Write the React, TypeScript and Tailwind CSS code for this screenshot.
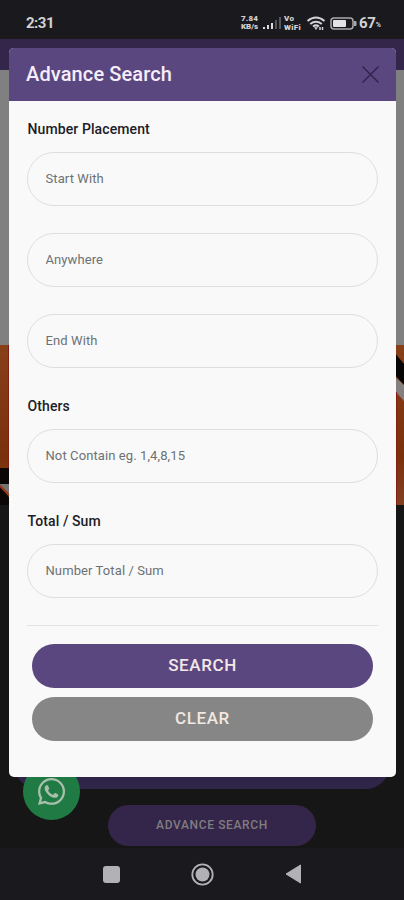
import React from "react";
import { FaWhatsapp } from "react-icons/fa";

function StatusBar() {
  return (
    <header className="flex h-[39px] shrink-0 items-start bg-[#1a191d] pl-[26px] pt-[13px] text-[#d2d2d4]">
      <span className="w-[215px] text-[15px] font-bold leading-5 tracking-[-0.5px]">2:31</span>
      <div className="flex h-5 items-center">
        <div className="w-[21px] whitespace-nowrap text-[8px] font-black leading-[8px]">
          <div className="tracking-[0.2px]">7.84</div>
          <div>KB/s</div>
        </div>
        <svg className="h-[13px] w-[19px]" viewBox="0 0 19 13">
          <path d="M1 10h2v2H1zM5 8h2v4H5zM9 6h2v6H9z" fill="#dddddf" />
          <path d="M13 3h2v9h-2zM17 0h2v12h-2z" fill="#55555a" />
        </svg>
        <div className="ml-[3px] w-[22px] whitespace-nowrap text-[8px] font-black">
          <div className="leading-[9px] tracking-[0.4px]">Vo</div>
          <div className="leading-[9px] tracking-[0.3px]">WiFi</div>
        </div>
        <svg className="h-[16px] w-[20px]" viewBox="0 0 20 16" fill="none" stroke="#d2d2d4" strokeWidth="2">
          <path d="M1.5 6Q10-1 18.500 6" />
          <path d="M4.200 9Q10 4.500 15.800 9" />
          <path d="M7 11.500Q10 9.200 13 11.500" />
          <path d="M8 12.300h4L10 15z" fill="#d2d2d4" stroke="none" />
          <path d="M14 12v3M16.500 12v3" strokeWidth="1.500" />
        </svg>
        <svg className="ml-[4px] h-[13px] w-[27px]" viewBox="0 0 27 13">
          <rect x="1" y="1" width="22" height="11" rx="3" fill="#1a191d" stroke="#aaaaad" strokeWidth="1.500" />
          <rect x="3" y="3" width="13" height="7" rx="1" fill="#e3e3e5" />
          <path d="M24 4h1.500q1 0 1 1v3q0 1-1 1H24z" fill="#aaaaad" />
        </svg>
        <span className="ml-[2px] text-[15px] font-bold leading-5 tracking-[-0.3px]">67</span>
        <span className="mt-[4px] text-[7px] font-bold leading-[8px]">%</span>
      </div>
    </header>
  );
}

function Page() {
  return (
    <div className="flex h-[900px] flex-col bg-[#161616]">
      <StatusBar />
      <div className="h-[31px] shrink-0 bg-[#33264a]" />
      <div className="h-[275px] shrink-0 bg-[#808080]" />
      <svg className="h-[160px] w-full shrink-0" viewBox="0 0 404 160">
        <defs>
          <linearGradient id="banner" x1="0" x2="0" y1="0" y2="1">
            <stop stopColor="#884019" />
            <stop offset="0.700" stopColor="#7b300c" />
            <stop offset="1" stopColor="#824122" />
          </linearGradient>
        </defs>
        <path d="M0 0h404v160H0z" fill="url(#banner)" />
        <path d="M0 123h12v37H0z" fill="#0c0707" />
        <path d="M0 139h12v17L0 140z" fill="#777373" />
        <path d="M0 141l12 12" stroke="#9b3517" strokeWidth="2" />
        <path d="M394 7l10 12v21l-10-11z" fill="#080505" />
        <path d="M394 31l10 9v16l-10-11z" fill="#858080" />
        <path d="M8.500 0v123M396.500 47v113" stroke="#801e14" strokeWidth="1" />
      </svg>
      <main className="flex h-[343px] shrink-0 flex-col items-center">
        <div className="mt-[235px] h-[49px] w-[376px] shrink-0 rounded-full bg-[#2e2549]" />
        <button className="ml-[20px] mt-[16px] h-[41px] w-[208px] shrink-0 rounded-full bg-[#33264a] pb-[2px] text-[12px] font-medium tracking-[0.630px] text-[#827c80]">
          ADVANCE SEARCH
        </button>
      </main>
      <nav className="flex h-[52px] shrink-0 items-center bg-[#1a191e] pl-[103px]">
        <div className="size-[17px] rounded-[3px] bg-[#b2b1b5]" />
        <svg className="ml-[71px] size-[23px]" viewBox="0 0 23 23">
          <circle cx="11.500" cy="11.500" r="10.200" fill="none" stroke="#b2b1b5" strokeWidth="1.800" />
          <circle cx="11.500" cy="11.500" r="7" fill="#b2b1b5" />
        </svg>
        <svg className="ml-[71px] h-[20px] w-[17px]" viewBox="0 0 17 20">
          <path d="M15.500 1v18L1 10z" fill="#b2b1b5" stroke="#b2b1b5" strokeWidth="1" strokeLinejoin="round" />
        </svg>
      </nav>
    </div>
  );
}

function Field({ placeholder, className }: { placeholder: string; className: string }) {
  return (
    <input
      type="text"
      placeholder={placeholder}
      className={
        "block w-full shrink-0 rounded-full border border-[#dedede] bg-[#f9f9f9] pb-[2px] pl-[17.500px] pr-[17px] text-[13px] tracking-[0.100px] placeholder:text-[#6c7175] " +
        className
      }
    />
  );
}

function Label({ children, className }: { children: string; className: string }) {
  return (
    <h2 className={"h-[20px] shrink-0 pl-[0.500px] text-[14px] font-medium leading-5 tracking-[0.100px] text-[#1c2026] " + className}>
      {children}
    </h2>
  );
}

function SearchDialog() {
  return (
    <section className="absolute left-[9px] top-[48px] flex h-[729px] w-[387px] flex-col overflow-hidden rounded-[5px] bg-[#f9f9f9]">
      <header className="flex h-[53px] shrink-0 items-center justify-between bg-[#5b4780] pl-[17px] pr-[17px]">
        <h1 className="pb-[2px] text-[20px] font-medium tracking-[0.120px] text-[#f5eefa]">Advance Search</h1>
        <button aria-label="Close">
          <svg className="size-[17px]" viewBox="0 0 17 17" stroke="#35214c" strokeWidth="1.500">
            <path d="M.5.5l16 16M16.500.5l-16 16" />
          </svg>
        </button>
      </header>
      <div className="flex flex-col px-[18px]">
        <Label className="mt-[18px]">Number Placement</Label>
        <Field placeholder="Start With" className="mt-[13px] h-[54px]" />
        <Field placeholder="Anywhere" className="mt-[27px] h-[54px]" />
        <Field placeholder="End With" className="mt-[27px] h-[54px]" />
        <Label className="mt-[28px]">Others</Label>
        <Field placeholder="Not Contain eg. 1,4,8,15" className="mt-[13px] h-[54px]" />
        <Label className="mt-[28px]">Total / Sum</Label>
        <Field placeholder="Number Total / Sum" className="mt-[13px] h-[54px]" />
        <hr className="mt-[27px] border-[#e3e3e3]" />
        <button className="mx-[5px] mt-[18px] h-[44px] rounded-full bg-[#5b4780] text-[17px] font-medium tracking-[0.600px] text-[#f5e7e7]">
          SEARCH
        </button>
        <button className="mx-[5px] mt-[9px] h-[44px] rounded-full bg-[#868686] text-[17px] font-medium tracking-[0.600px] text-[#f1e8e0]">
          CLEAR
        </button>
      </div>
    </section>
  );
}

export default function App() {
  return (
    <div className="relative h-[900px] w-[404px] overflow-hidden font-['Roboto',sans-serif]">
      <Page />
      <div className="absolute left-[23px] top-[763px] flex size-[57px] items-center justify-center rounded-full bg-[#207a43] text-[#a9bfae]">
        <FaWhatsapp className="size-[31px]" />
      </div>
      <SearchDialog />
    </div>
  );
}
